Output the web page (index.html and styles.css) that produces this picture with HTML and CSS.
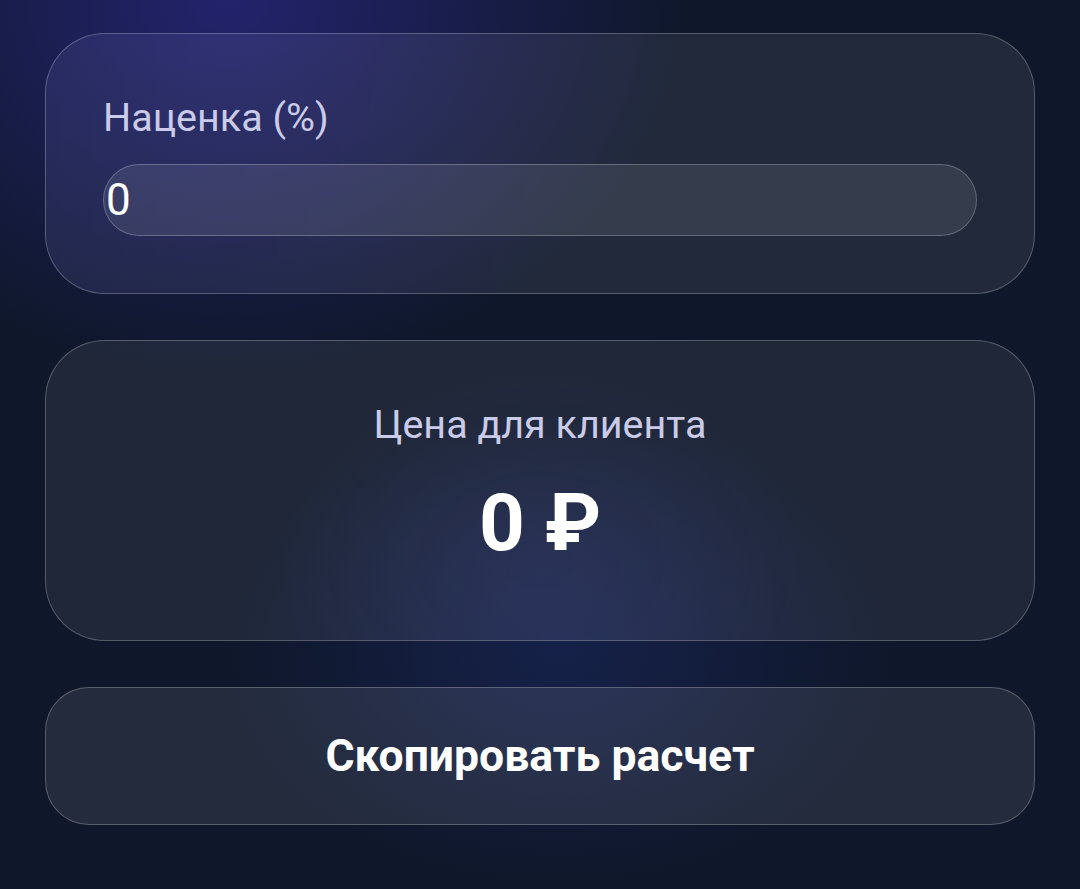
FILE: index.html
```html
<!DOCTYPE html>
<html lang="ru">
<head>
    <meta charset="UTF-8">
    <meta name="viewport" content="width=device-width, initial-scale=1.0">
    <title>Калькулятор наценки</title>
    <link rel="stylesheet" href="styles.css">
</head>
<body>
    <div class="calc">
        <div class="calc-card markup-card">
            <label class="calc-label" for="markup">Наценка (%)</label>
            <input class="calc-input" id="markup" type="text" value="0">
        </div>

        <div class="calc-card result-card">
            <div class="result-label">Цена для клиента</div>
            <div class="result-value">0 ₽</div>
        </div>

        <button class="copy-btn" type="button">Скопировать расчет</button>
    </div>
</body>
</html>
```

FILE: styles.css
```css
* {
    box-sizing: border-box;
    margin: 0;
    padding: 0;
}

body {
    min-height: 889px;
    padding: 33px 45px;
    font-family: Roboto, 'Noto Sans', sans-serif;
    color: #fff;
    background:
        radial-gradient(ellipse 460px 380px at 230px 0, rgba(40, 38, 125, 0.8), transparent 100%),
        radial-gradient(ellipse 340px 240px at 560px 650px, rgba(32, 48, 120, 0.4), transparent 100%),
        #0f172a;
}

.calc {
    display: flex;
    flex-direction: column;
    gap: 46px;
}

.calc-card {
    border: 1px solid rgba(255, 255, 255, 0.24);
    border-radius: 60px;
    background: rgba(255, 255, 255, 0.07);
}

/* Markup input */
.markup-card {
    display: flex;
    flex-direction: column;
    padding: 60px 57px 57px;
    background: linear-gradient(90deg, rgba(130, 130, 210, 0.14) 0%, rgba(255, 255, 255, 0.08) 50%, rgba(255, 255, 255, 0.08) 100%);
}

.calc-label {
    font-size: 39.5px;
    line-height: 48px;
    color: #c9cbe8;
    margin-bottom: 22px;
}

.calc-input {
    height: 72px;
    border: 1px solid rgba(255, 255, 255, 0.24);
    border-radius: 36px;
    background: rgba(255, 255, 255, 0.09);
    padding: 0 0 0 2px;
    font-family: Roboto, sans-serif;
    font-size: 44px;
    color: #fff;
    outline: none;
}

/* Result */
.result-card {
    height: 301px;
    display: flex;
    flex-direction: column;
    align-items: center;
    padding-top: 60px;
    background:
        radial-gradient(ellipse 260px 200px at 50% 75%, rgba(70, 80, 150, 0.16), transparent 100%),
        rgba(255, 255, 255, 0.07);
}

.result-label {
    font-size: 39.5px;
    line-height: 47px;
    color: #c9cbe8;
    margin-bottom: 28px;
}

.result-value {
    font-size: 80px;
    line-height: 94px;
    font-weight: 700;
}

/* Copy button */
.copy-btn {
    height: 138px;
    border: 1px solid rgba(255, 255, 255, 0.24);
    border-radius: 44px;
    background: rgba(255, 255, 255, 0.09);
    font-family: Roboto, sans-serif;
    font-size: 44.5px;
    font-weight: 700;
    color: #fff;
    cursor: pointer;
}
```
